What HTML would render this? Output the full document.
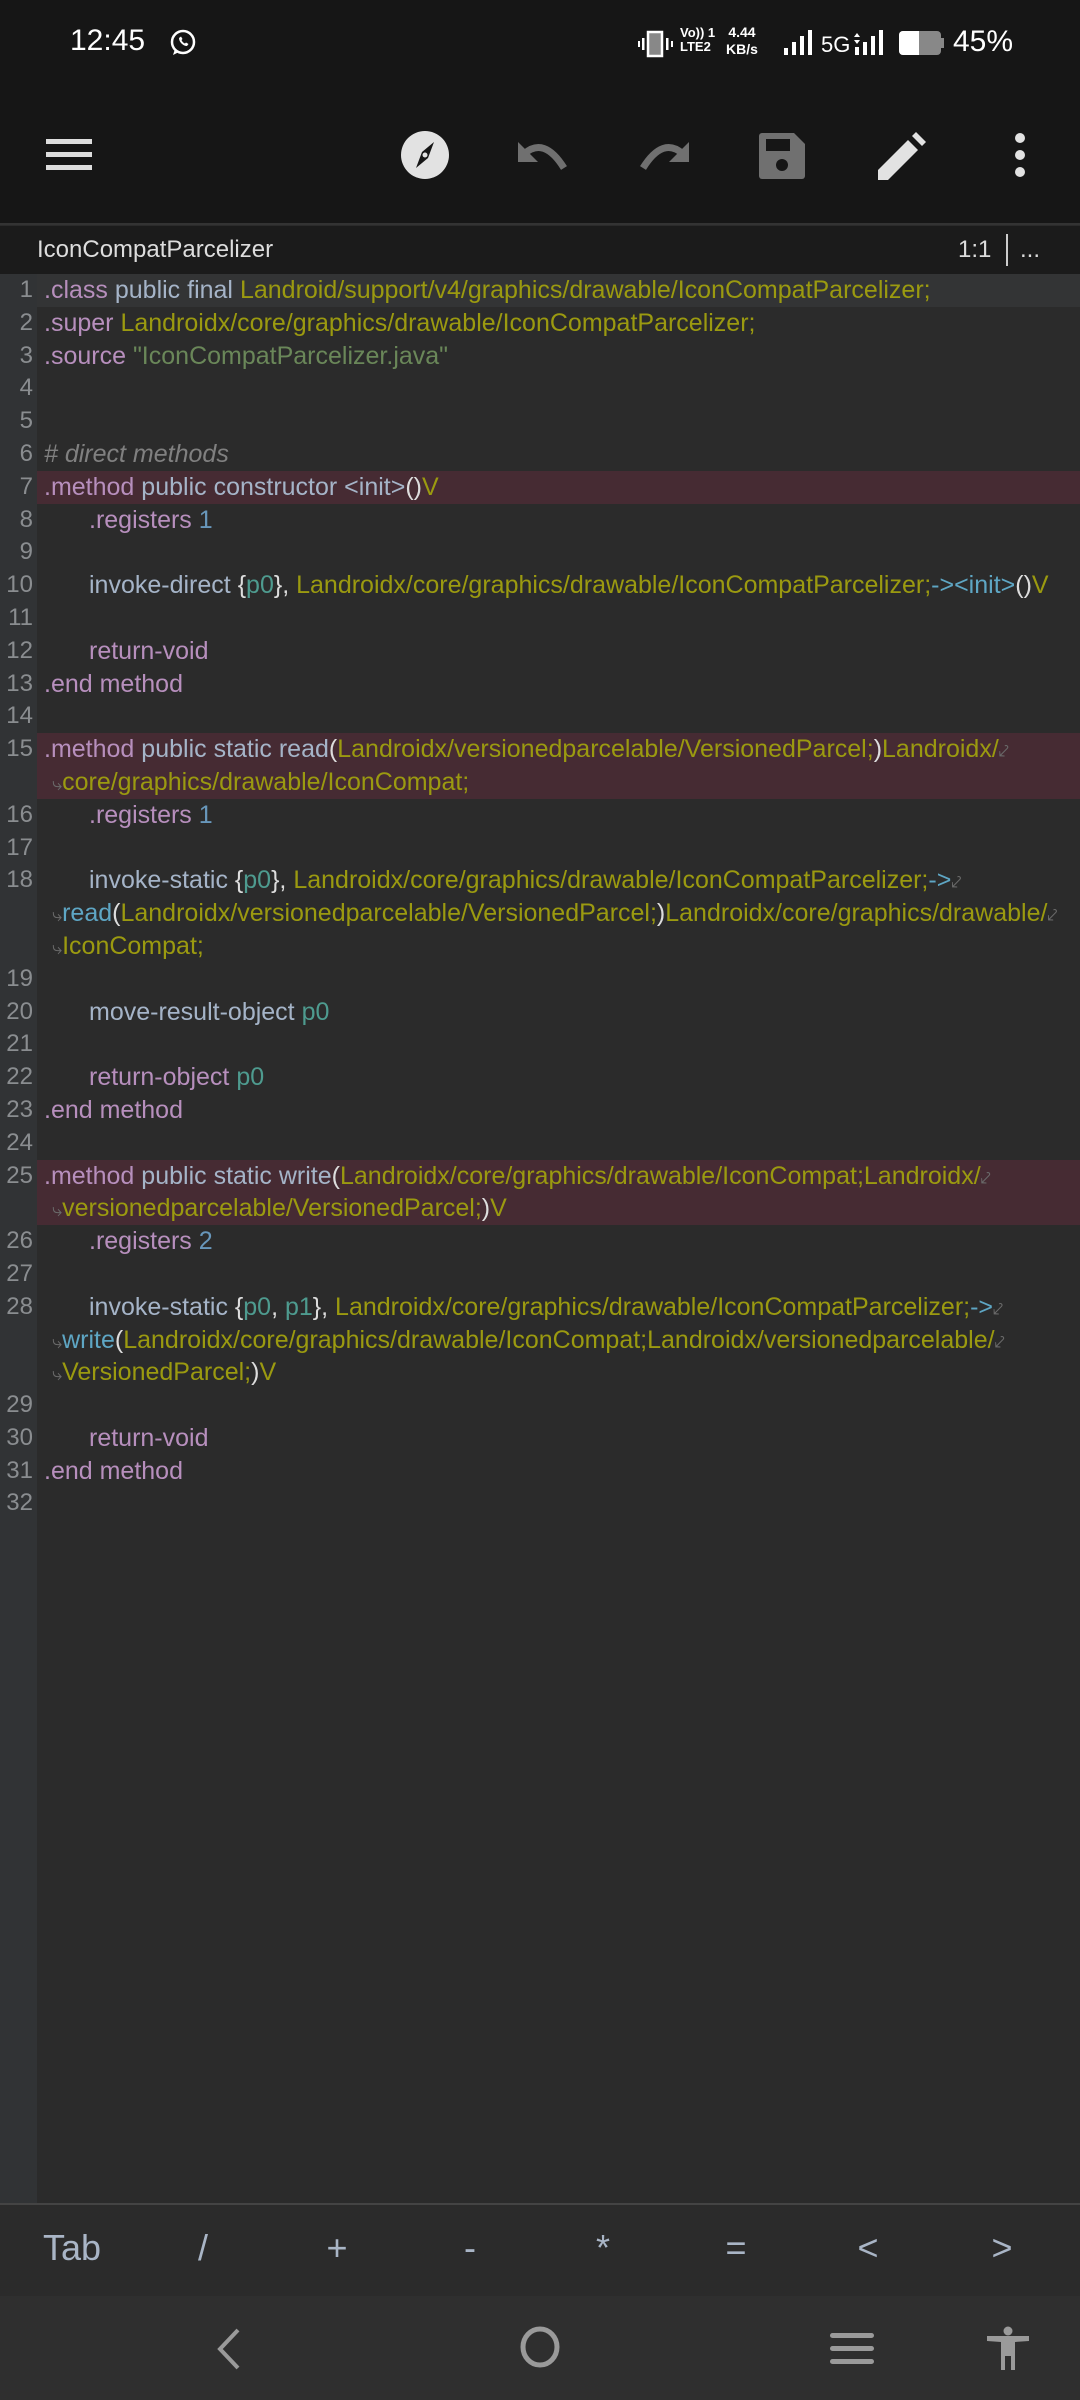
<!DOCTYPE html>
<html><head><meta charset="utf-8"><style>
*{margin:0;padding:0;box-sizing:border-box}
body{width:1080px;height:2400px;background:#2b2b2b;font-family:"Liberation Sans",sans-serif;position:relative;overflow:hidden}
.abs{position:absolute}
#top{left:0;top:0;width:1080px;height:225px;background:#161616;border-bottom:2px solid #333}
#title{left:0;top:226px;width:1080px;height:48px;background:#1b1b1b;color:#ddd;font-size:24px}
#gut{left:0;top:274px;width:37px;height:1929px;background:#313335}
#code{left:0;top:274px;width:1080px;font-size:25px}
.r{position:relative;height:32.8px;line-height:32.8px}
.n{position:absolute;right:1047px;color:#8a8d90;text-align:right;font-size:24px}
.t,.w{position:absolute;left:44px;white-space:pre}
.in{left:89px}
.w{left:52px}
.hl{background:linear-gradient(to right,transparent 37px,#462b33 37px)}
.cur{background:linear-gradient(to right,transparent 37px,#333435 37px)}
.k{color:#b78fbd}.p{color:#a5b4c8}.o{color:#9b9a10}.s{color:#6a8759}.c{color:#808080;font-style:italic}
.b{color:#5ea6c4}.g{color:#4e9b8f}.x{color:#ddd}.m{color:#6a6a6a;font-size:18px}
#kb{left:0;top:2203px;width:1080px;height:93px;background:#2b2b2b;border-top:2px solid #444;color:#a9b5c6;font-size:36px}
#kb span{position:absolute;top:22px;transform:translateX(-50%)}
#nav{left:0;top:2296px;width:1080px;height:104px;background:#2f2f2f}
</style></head><body>
<div id="top" class="abs">
 <div class="abs" style="left:70px;top:24px;color:#fff;font-size:30px">12:45</div>
 <svg class="abs" style="left:168px;top:28px" width="30" height="30" viewBox="0 0 30 30"><circle cx="15" cy="14" r="11" fill="none" stroke="#fff" stroke-width="2.5"/><path d="M5 27 L7 21 L11 24Z" fill="#fff"/><path d="M11 10c0 4 4 8 8 8l1.5-2-2.5-1.5-1 1c-1.5-.5-3-2-3.5-3.5l1-1L13 8.5z" fill="#fff"/></svg>
 <svg class="abs" style="left:638px;top:30px" width="36" height="28"><rect x="10" y="2" width="14" height="24" fill="#888" stroke="#fff" stroke-width="2.5"/><rect x="4" y="8" width="2.5" height="12" fill="#fff"/><rect x="0" y="11" width="2" height="6" fill="#fff"/><rect x="28" y="8" width="2.5" height="12" fill="#fff"/><rect x="33" y="11" width="2" height="6" fill="#fff"/></svg>
 <div class="abs" style="left:680px;top:26px;color:#fff;font-size:13px;font-weight:bold;line-height:14px">Vo)) 1<br>LTE2</div>
 <div class="abs" style="left:726px;top:24px;color:#fff;font-size:14px;font-weight:bold;line-height:17px;text-align:center">4.44<br>KB/s</div>
 <svg class="abs" style="left:784px;top:30px" width="100" height="26"><rect x="0" y="18" width="4" height="7" fill="#fff"/><rect x="8" y="12" width="4" height="13" fill="#fff"/><rect x="16" y="6" width="4" height="19" fill="#fff"/><rect x="24" y="0" width="4" height="25" fill="#fff"/><text x="37" y="22" fill="#fff" font-size="22" font-family="Liberation Sans">5G</text><path d="M73 3l3 4h-6zM73 14l3-4h-6z" fill="#fff"/><rect x="71" y="17" width="4" height="8" fill="#fff"/><rect x="79" y="12" width="4" height="13" fill="#fff"/><rect x="87" y="6" width="4" height="19" fill="#fff"/><rect x="95" y="0" width="4" height="25" fill="#fff"/></svg>
 <svg class="abs" style="left:899px;top:31px" width="46" height="24"><rect x="0" y="0" width="42" height="24" rx="4" fill="#888"/><rect x="0" y="0" width="20" height="24" rx="4" fill="#fff"/><rect x="16" y="0" width="4" height="24" fill="#fff"/><rect x="42" y="7" width="3" height="10" fill="#888"/></svg>
 <div class="abs" style="left:953px;top:25px;color:#fff;font-size:30px">45%</div>
 <svg class="abs" style="left:46px;top:138px" width="46" height="34"><rect y="1" width="46" height="5" fill="#ddd"/><rect y="14" width="46" height="5" fill="#ddd"/><rect y="27" width="46" height="5" fill="#ddd"/></svg>
 <svg class="abs" style="left:400px;top:130px" width="50" height="50" viewBox="0 0 50 50"><circle cx="25" cy="25" r="24" fill="#e2e2e2"/><path d="M34 12 L28 28 L16 38 L22 22Z" fill="#161616"/><circle cx="25" cy="25" r="2.5" fill="#e2e2e2"/></svg>
 <svg class="abs" style="left:518px;top:138px" width="52" height="34" viewBox="0 0 52 34"><path d="M6 16 Q26 -2 46 30" fill="none" stroke="#707070" stroke-width="7"/><path d="M0 4 L0 24 L20 24Z" fill="#707070"/></svg>
 <svg class="abs" style="left:637px;top:138px" width="52" height="34" viewBox="0 0 52 34"><path d="M46 16 Q26 -2 6 30" fill="none" stroke="#707070" stroke-width="7"/><path d="M52 4 L52 24 L32 24Z" fill="#707070"/></svg>
 <svg class="abs" style="left:759px;top:133px" width="46" height="46" viewBox="0 0 46 46"><path d="M3 0h32l11 11v32a3 3 0 0 1-3 3H3a3 3 0 0 1-3-3V3a3 3 0 0 1 3-3z" fill="#707070"/><rect x="7" y="6" width="24" height="12" fill="#161616"/><circle cx="23" cy="32" r="6" fill="#161616"/></svg>
 <svg class="abs" style="left:878px;top:132px" width="48" height="48" viewBox="0 0 48 48"><path d="M0 38 L30 8 L40 18 L10 48 L0 48Z M34 4 L38 0 L48 10 L44 14Z" fill="#e2e2e2"/></svg>
 <svg class="abs" style="left:1013px;top:132px" width="14" height="46"><circle cx="7" cy="6" r="5" fill="#e2e2e2"/><circle cx="7" cy="23" r="5" fill="#e2e2e2"/><circle cx="7" cy="40" r="5" fill="#e2e2e2"/></svg>
</div>
<div id="title" class="abs">
 <div class="abs" style="left:37px;top:10px">IconCompatParcelizer</div>
 <div class="abs" style="left:958px;top:10px">1:1</div>
 <div class="abs" style="left:1006px;top:8px;width:2px;height:32px;background:#ccc"></div>
 <div class="abs" style="left:1020px;top:10px">...</div>
</div>
<div id="gut" class="abs"></div>
<div id="code" class="abs">
<div class="r cur"><span class="n">1</span><span class="t"><span class="k">.class</span> <span class="p">public final</span> <span class="o">Landroid/support/v4/graphics/drawable/IconCompatParcelizer;</span></span></div>
<div class="r"><span class="n">2</span><span class="t"><span class="k">.super</span> <span class="o">Landroidx/core/graphics/drawable/IconCompatParcelizer;</span></span></div>
<div class="r"><span class="n">3</span><span class="t"><span class="k">.source</span> <span class="s">"IconCompatParcelizer.java"</span></span></div>
<div class="r"><span class="n">4</span></div>
<div class="r"><span class="n">5</span></div>
<div class="r"><span class="n">6</span><span class="t c"># direct methods</span></div>
<div class="r hl"><span class="n">7</span><span class="t"><span class="k">.method</span> <span class="p">public constructor &lt;init&gt;</span><span class="x">()</span><span class="o">V</span></span></div>
<div class="r"><span class="n">8</span><span class="t in"><span class="k">.registers</span> <span style="color:#6897bb">1</span></span></div>
<div class="r"><span class="n">9</span></div>
<div class="r"><span class="n">10</span><span class="t in"><span class="p">invoke-direct</span> <span class="x">{</span><span class="g">p0</span><span class="x">},</span> <span class="o">Landroidx/core/graphics/drawable/IconCompatParcelizer;</span><span class="b">-&gt;&lt;init&gt;</span><span class="x">()</span><span class="o">V</span></span></div>
<div class="r"><span class="n">11</span></div>
<div class="r"><span class="n">12</span><span class="t in"><span class="k">return-void</span></span></div>
<div class="r"><span class="n">13</span><span class="t"><span class="k">.end method</span></span></div>
<div class="r"><span class="n">14</span></div>
<div class="r hl"><span class="n">15</span><span class="t"><span class="k">.method</span> <span class="p">public static read</span><span class="x">(</span><span class="o">Landroidx/versionedparcelable/VersionedParcel;</span><span class="x">)</span><span class="o">Landroidx/</span><span class="m">⤦</span></span></div>
<div class="r hl"><span class="w"><span class="m">⤷</span><span class="o">core/graphics/drawable/IconCompat;</span></span></div>
<div class="r"><span class="n">16</span><span class="t in"><span class="k">.registers</span> <span style="color:#6897bb">1</span></span></div>
<div class="r"><span class="n">17</span></div>
<div class="r"><span class="n">18</span><span class="t in"><span class="p">invoke-static</span> <span class="x">{</span><span class="g">p0</span><span class="x">},</span> <span class="o">Landroidx/core/graphics/drawable/IconCompatParcelizer;</span><span class="b">-&gt;</span><span class="m">⤦</span></span></div>
<div class="r"><span class="w"><span class="m">⤷</span><span class="b">read</span><span class="x">(</span><span class="o">Landroidx/versionedparcelable/VersionedParcel;</span><span class="x">)</span><span class="o">Landroidx/core/graphics/drawable/</span><span class="m">⤦</span></span></div>
<div class="r"><span class="w"><span class="m">⤷</span><span class="o">IconCompat;</span></span></div>
<div class="r"><span class="n">19</span></div>
<div class="r"><span class="n">20</span><span class="t in"><span class="p">move-result-object</span> <span class="g">p0</span></span></div>
<div class="r"><span class="n">21</span></div>
<div class="r"><span class="n">22</span><span class="t in"><span class="k">return-object</span> <span class="g">p0</span></span></div>
<div class="r"><span class="n">23</span><span class="t"><span class="k">.end method</span></span></div>
<div class="r"><span class="n">24</span></div>
<div class="r hl"><span class="n">25</span><span class="t"><span class="k">.method</span> <span class="p">public static write</span><span class="x">(</span><span class="o">Landroidx/core/graphics/drawable/IconCompat;Landroidx/</span><span class="m">⤦</span></span></div>
<div class="r hl"><span class="w"><span class="m">⤷</span><span class="o">versionedparcelable/VersionedParcel;</span><span class="x">)</span><span class="o">V</span></span></div>
<div class="r"><span class="n">26</span><span class="t in"><span class="k">.registers</span> <span style="color:#6897bb">2</span></span></div>
<div class="r"><span class="n">27</span></div>
<div class="r"><span class="n">28</span><span class="t in"><span class="p">invoke-static</span> <span class="x">{</span><span class="g">p0</span><span class="x">,</span> <span class="g">p1</span><span class="x">},</span> <span class="o">Landroidx/core/graphics/drawable/IconCompatParcelizer;</span><span class="b">-&gt;</span><span class="m">⤦</span></span></div>
<div class="r"><span class="w"><span class="m">⤷</span><span class="b">write</span><span class="x">(</span><span class="o">Landroidx/core/graphics/drawable/IconCompat;Landroidx/versionedparcelable/</span><span class="m">⤦</span></span></div>
<div class="r"><span class="w"><span class="m">⤷</span><span class="o">VersionedParcel;</span><span class="x">)</span><span class="o">V</span></span></div>
<div class="r"><span class="n">29</span></div>
<div class="r"><span class="n">30</span><span class="t in"><span class="k">return-void</span></span></div>
<div class="r"><span class="n">31</span><span class="t"><span class="k">.end method</span></span></div>
<div class="r"><span class="n">32</span></div>
</div>
<div id="kb" class="abs">
 <span style="left:72px">Tab</span><span style="left:203px">/</span><span style="left:337px">+</span><span style="left:470px">-</span><span style="left:603px">*</span><span style="left:736px">=</span><span style="left:868px">&lt;</span><span style="left:1002px">&gt;</span>
</div>
<div id="nav" class="abs">
 <svg class="abs" style="left:214px;top:32px" width="28" height="42"><path d="M24 2 L6 21 L24 40" fill="none" stroke="#9a9a9a" stroke-width="4"/></svg>
 <svg class="abs" style="left:518px;top:28px" width="44" height="46"><ellipse cx="22" cy="23" rx="17" ry="18" fill="none" stroke="#9a9a9a" stroke-width="5"/></svg>
 <svg class="abs" style="left:829px;top:36px" width="46" height="34"><rect x="1" y="1" width="44" height="5" rx="2.5" fill="#9a9a9a"/><rect x="1" y="14" width="44" height="5" rx="2.5" fill="#9a9a9a"/><rect x="1" y="27" width="44" height="5" rx="2.5" fill="#9a9a9a"/></svg>
 <svg class="abs" style="left:986px;top:30px" width="44" height="46" viewBox="0 0 44 46"><circle cx="22" cy="5" r="4.5" fill="#9a9a9a"/><path d="M1 10 L43 10 L43 15 L29 16 L29 44 L25 44 L25 30 L19 30 L19 44 L15 44 L15 16 L1 15Z" fill="#9a9a9a"/></svg>
</div>
</body></html>
